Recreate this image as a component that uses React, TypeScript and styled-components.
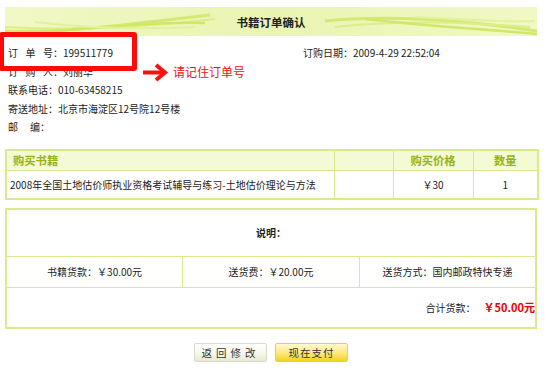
import styled, { createGlobalStyle } from 'styled-components';

const GlobalStyle = createGlobalStyle`
  body {
    margin: 0;
    background: #ffffff;
    font-family: "Noto Sans CJK SC", "Noto Sans", sans-serif;
    color: #222;
  }
`;

const Page = styled.div`
  position: relative;
  width: 545px;
  box-sizing: border-box;
  padding: 7px 8px 0 5px;
  font-size: 10px;
`;

const Banner = styled.div`
  position: relative;
  height: 29px;
  display: flex;
  align-items: center;
  justify-content: center;
  background: linear-gradient(90deg, #f1f8c6, #eaf4b2 50%, #f1f8c6);
  overflow: hidden;
`;

const BannerWaves = styled.svg`
  position: absolute;
  inset: 0;
`;

const BannerTitle = styled.span`
  position: relative;
  font-size: 11.5px;
  font-weight: bold;
  color: #222;
`;

const Info = styled.div`
  margin-top: 8px;
  padding-left: 3px;
  line-height: 18.5px;
`;

const InfoRow = styled.div`
  display: flex;
`;

const InfoCell = styled.div<{ $width?: number }>`
  width: ${({ $width }) => ($width ? `${$width}px` : 'auto')};
  white-space: nowrap;
`;

const Spaced = styled.span<{ $gap: number }>`
  letter-spacing: ${({ $gap }) => $gap}px;
`;

const RedBox = styled.div`
  position: absolute;
  left: -1px;
  top: 32px;
  width: 138px;
  height: 39px;
  box-sizing: border-box;
  border: 5px solid #ff0a0a;
  border-radius: 3px;
`;

const Arrow = styled.svg`
  position: absolute;
  left: 143px;
  top: 63px;
`;

const Note = styled.span`
  position: absolute;
  left: 173px;
  top: 64px;
  font-size: 12px;
  line-height: 16px;
  color: #f01010;
`;

const Table = styled.table<{ $top: number }>`
  width: 532px;
  margin-top: ${({ $top }) => $top}px;
  border-collapse: collapse;
  table-layout: fixed;
  border: 2px solid #dbe98c;
`;

const HeadCell = styled.th<{ $align?: string }>`
  height: 19px;
  padding: 0 6px;
  background: #f4fad6;
  border: 1px solid #dbe98c;
  color: #93b414;
  font-size: 11.3px;
  font-weight: bold;
  text-align: ${({ $align }) => $align || 'left'};
`;

const Cell = styled.td<{ $align?: string; $height?: number; $bold?: boolean; $flush?: boolean }>`
  height: ${({ $height }) => $height || 27}px;
  padding: ${({ $flush }) => ($flush ? '0' : '0 3px')};
  border: 1px solid #dbe98c;
  text-align: ${({ $align }) => $align || 'left'};
  font-weight: ${({ $bold }) => ($bold ? 'bold' : 'normal')};
  white-space: nowrap;
  overflow: visible;
`;

const Total = styled.span`
  margin-left: 8px;
  color: #ee0000;
  font-weight: bold;
  font-size: 11px;
`;

const Actions = styled.div`
  display: flex;
  justify-content: center;
  gap: 8px;
  margin-top: 14px;
`;

const Button = styled.button<{ $primary?: boolean; $spacing: number }>`
  width: 73px;
  height: 19px;
  padding: 0;
  font-family: inherit;
  font-size: 10.5px;
  letter-spacing: ${({ $spacing }) => $spacing}px;
  color: #333;
  border-radius: 2px;
  border: 1px solid ${({ $primary }) => ($primary ? '#e8cf55' : '#d9dcc6')};
  background: ${({ $primary }) =>
    $primary
      ? 'linear-gradient(#fffbd0, #fbe87a 55%, #f3d21c)'
      : 'linear-gradient(#ffffff, #f6f7ea 55%, #e6ead2)'};
`;

export default function App() {
  return (
    <Page>
      <GlobalStyle />
      <Banner>
        <BannerWaves width="532" height="29" viewBox="0 0 532 29" fill="none">
          <path d="M0 24 C60 26 120 18 205 8" stroke="#d3ea70" strokeWidth="3" />
          <path d="M0 20 C70 24 140 20 210 12" stroke="#dcee88" strokeWidth="2" />
          <path d="M10 27 C80 22 150 14 200 16" stroke="#d0e868" strokeWidth="2.5" />
          <path d="M30 15 C90 22 150 22 190 20" stroke="#e2f19a" strokeWidth="2" />
          <path d="M320 14 C380 8 450 12 532 24" stroke="#d3ea70" strokeWidth="3" />
          <path d="M330 20 C400 12 470 16 525 20" stroke="#dcee88" strokeWidth="2" />
          <path d="M360 12 C430 20 480 22 532 27" stroke="#d0e868" strokeWidth="2.5" />
          <path d="M410 10 C460 12 500 16 530 14" stroke="#e2f19a" strokeWidth="2" />
        </BannerWaves>
        <BannerTitle>书籍订单确认</BannerTitle>
      </Banner>

      <Info>
        <InfoRow>
          <InfoCell $width={295}>
            <Spaced $gap={7.5}>订单</Spaced>号：199511779
          </InfoCell>
          <InfoCell>订购日期：2009-4-29 22:52:04</InfoCell>
        </InfoRow>
        <InfoRow>
          <InfoCell>
            <Spaced $gap={7.5}>订购</Spaced>人：刘丽华
          </InfoCell>
        </InfoRow>
        <InfoRow>
          <InfoCell>联系电话：010-63458215</InfoCell>
        </InfoRow>
        <InfoRow>
          <InfoCell>寄送地址：北京市海淀区12号院12号楼</InfoCell>
        </InfoRow>
        <InfoRow>
          <InfoCell>
            <Spaced $gap={12}>邮</Spaced>编：
          </InfoCell>
        </InfoRow>
      </Info>

      <RedBox />
      <Arrow width="26" height="20" viewBox="0 0 26 20">
        <path d="M0 9.5 H20" stroke="#ff1010" strokeWidth="4" />
        <path d="M13 2 L22 9.5 L13 17" stroke="#ff1010" strokeWidth="4" fill="none" />
      </Arrow>
      <Note>请记住订单号</Note>

      <Table $top={12}>
        <colgroup>
          <col style={{ width: 328 }} />
          <col style={{ width: 59 }} />
          <col style={{ width: 80 }} />
          <col style={{ width: 65 }} />
        </colgroup>
        <thead>
          <tr>
            <HeadCell>购买书籍</HeadCell>
            <HeadCell />
            <HeadCell $align="center">购买价格</HeadCell>
            <HeadCell $align="center">数量</HeadCell>
          </tr>
        </thead>
        <tbody>
          <tr>
            <Cell>2008年全国土地估价师执业资格考试辅导与练习-土地估价理论与方法</Cell>
            <Cell />
            <Cell $align="center">￥30</Cell>
            <Cell $align="center">1</Cell>
          </tr>
        </tbody>
      </Table>

      <Table $top={8}>
        <tbody>
          <tr>
            <Cell colSpan={3} $align="center" $height={46} $bold>
              说明：
            </Cell>
          </tr>
          <tr>
            <Cell $align="center" $height={30}>书籍货款：￥30.00元</Cell>
            <Cell $align="center" $height={30}>送货费：￥20.00元</Cell>
            <Cell $align="center" $height={30}>送货方式：国内邮政特快专递</Cell>
          </tr>
          <tr>
            <Cell colSpan={3} $align="right" $height={39} $flush>
              合计货款：<Total>￥50.00元</Total>
            </Cell>
          </tr>
        </tbody>
      </Table>

      <Actions>
        <Button $spacing={4}>返回修改</Button>
        <Button $primary $spacing={1}>现在支付</Button>
      </Actions>
    </Page>
  );
}
